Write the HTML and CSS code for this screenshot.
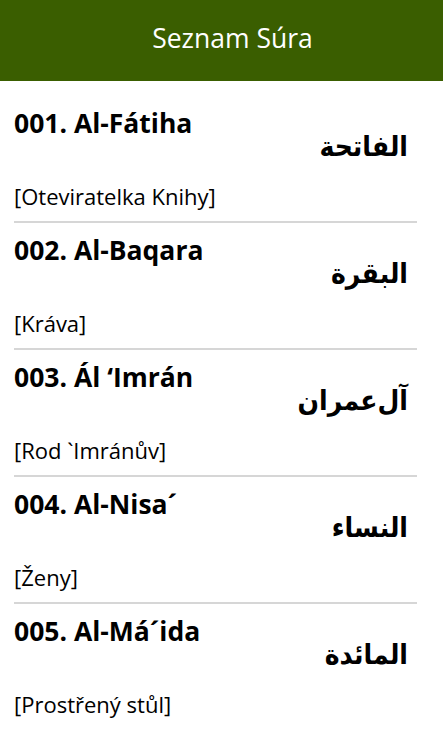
FILE: index.html
```html
<!DOCTYPE html>
<html lang="cs">
<head>
    <meta charset="UTF-8">
    <meta name="viewport" content="width=device-width, initial-scale=1.0">
    <title>Seznam Súra</title>
    <link rel="stylesheet" href="styles.css">
</head>
<body>
    <header class="topbar">Seznam Súra</header>

    <div class="list">
        <div class="sura">
            <div class="name">001. Al-Fátiha</div>
            <div class="arabic" lang="ar" dir="rtl">الفاتحة</div>
            <div class="meaning">[Oteviratelka Knihy]</div>
        </div>
        <div class="sura">
            <div class="name">002. Al-Baqara</div>
            <div class="arabic" lang="ar" dir="rtl">البقرة</div>
            <div class="meaning">[Kráva]</div>
        </div>
        <div class="sura">
            <div class="name">003. Ál ‘Imrán</div>
            <div class="arabic" lang="ar" dir="rtl">آل‌عمران</div>
            <div class="meaning">[Rod `Imránův]</div>
        </div>
        <div class="sura">
            <div class="name">004. Al-Nisa´</div>
            <div class="arabic" lang="ar" dir="rtl">النساء</div>
            <div class="meaning">[Ženy]</div>
        </div>
        <div class="sura">
            <div class="name">005. Al-Má´ida</div>
            <div class="arabic" lang="ar" dir="rtl">المائدة</div>
            <div class="meaning">[Prostřený stůl]</div>
        </div>
    </div>
</body>
</html>
```

FILE: styles.css
```css
body {
    margin: 0;
    background-color: #ffffff;
    color: #000000;
    font-family: "Open Sans", sans-serif;
    overflow: hidden;
}

.topbar {
    background-color: #3a5e00;
    color: #ffffff;
    height: 81px;
    box-sizing: border-box;
    padding: 0 0 6px 22px;
    display: flex;
    justify-content: center;
    align-items: center;
    font-size: 26.5px;
    font-weight: 400;
}

.list {
    padding: 15px 0 0 14px;
}

.sura {
    width: 403px;
    display: flex;
    flex-direction: column;
    padding: 10.2px 0 10.2px;
    border-bottom: 2px solid #d6d6d6;
}

.sura:last-child {
    border-bottom: none;
}

.name {
    font-size: 26.5px;
    line-height: 34px;
    font-weight: 700;
}

.arabic {
    align-self: flex-end;
    margin: -10.9px 9px 15.5px 0;
    font-family: "DejaVu Sans Condensed", "DejaVu Sans", sans-serif;
    font-size: 28px;
    line-height: 36px;
    font-weight: 700;
}

.meaning {
    font-size: 22px;
    line-height: 30px;
}
```
